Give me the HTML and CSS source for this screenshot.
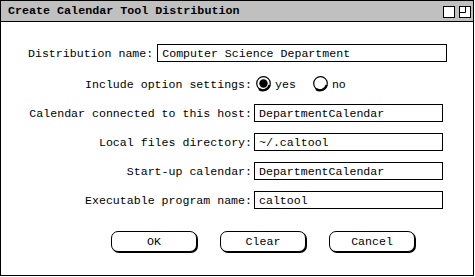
FILE: index.html
```html
<!DOCTYPE html>
<html lang="en">
<head>
    <meta charset="UTF-8">
    <title>Create Calendar Tool Distribution</title>
    <link rel="stylesheet" href="styles.css">
</head>
<body>

    <div class="window">
        <!-- title bar -->
        <div class="titlebar">
            <span class="title">Create Calendar Tool Distribution</span>
            <div class="title-icons">
                <svg width="12" height="12" viewBox="0 0 12 12">
                    <rect x="0.5" y="0.5" width="11" height="11" fill="#fff" stroke="#000"/>
                </svg>
                <svg width="12" height="12" viewBox="0 0 12 12">
                    <rect x="0.5" y="0.5" width="11" height="11" fill="#fff" stroke="#000"/>
                    <path d="M6.5 0.5 V6.5 H0.5" fill="none" stroke="#000"/>
                </svg>
            </div>
        </div>

        <!-- form -->
        <div class="form">
            <div class="dist-row">
                <label class="label">Distribution name:</label>
                <input class="field wide" type="text" value="Computer Science Department">
            </div>

            <div class="grid">
                <label class="label">Include option settings:</label>
                <div class="radios">
                    <span class="radio">
                        <svg width="16" height="16" viewBox="0 0 16 16">
                            <circle cx="7.5" cy="7.5" r="6.8" fill="#fff" stroke="#000" stroke-width="1.2"/>
                            <path d="M13.6 9 A6.8 6.8 0 0 1 3 13" fill="none" stroke="#000" stroke-width="2.2"/>
                            <circle cx="7.5" cy="7.5" r="4.2" fill="#000"/>
                        </svg>
                        yes
                    </span>
                    <span class="radio">
                        <svg width="16" height="16" viewBox="0 0 16 16">
                            <circle cx="7.5" cy="7.5" r="6.8" fill="#fff" stroke="#000" stroke-width="1.2"/>
                            <path d="M13.6 9 A6.8 6.8 0 0 1 3 13" fill="none" stroke="#000" stroke-width="2.2"/>
                        </svg>
                        no
                    </span>
                </div>

                <label class="label">Calendar connected to this host:</label>
                <input class="field" type="text" value="DepartmentCalendar">

                <label class="label">Local files directory:</label>
                <input class="field" type="text" value="~/.caltool">

                <label class="label">Start-up calendar:</label>
                <input class="field" type="text" value="DepartmentCalendar">

                <label class="label">Executable program name:</label>
                <input class="field" type="text" value="caltool">
            </div>

            <!-- buttons -->
            <div class="buttons">
                <button class="btn">OK</button>
                <button class="btn">Clear</button>
                <button class="btn">Cancel</button>
            </div>
        </div>
    </div>

</body>
</html>
```

FILE: styles.css
```css
/* page */
body {
    margin: 0;
    padding: 0;
    background: #fff;
    font-family: "Liberation Mono", "DejaVu Sans Mono", monospace;
    font-size: 11.6px;
    color: #000;
}

.window {
    width: 474px;
    height: 276px;
    box-sizing: border-box;
    border: 1px solid #000;
    background: #fff;
}

/* title bar */
.titlebar {
    height: 21px;
    box-sizing: border-box;
    background: #c0c0c0;
    border-bottom: 1px solid #000;
    display: flex;
    align-items: center;
    justify-content: space-between;
    padding: 0 2px 0 7px;
}

.title {
    font-weight: bold;
    font-size: 11.7px;
}

.title-icons {
    display: flex;
    gap: 4px;
    padding-top: 1px;
}

.title-icons svg {
    display: block;
}

/* form */
.form {
    padding: 22px 0 0 27px;
}

.dist-row {
    display: flex;
    align-items: center;
    gap: 4px;
}

.label {
    white-space: nowrap;
}

.field {
    height: 18px;
    box-sizing: border-box;
    border: 1px solid #000;
    border-radius: 0;
    background: #fff;
    padding: 0 4px;
    margin: 0;
    font-family: inherit;
    font-size: 11.6px;
    color: #000;
    outline: none;
}

.field.wide {
    width: 290px;
}

.grid {
    display: grid;
    grid-template-columns: 224px 189px;
    column-gap: 2px;
    row-gap: 11px;
    margin-top: 13px;
    align-items: center;
}

.grid .label {
    text-align: right;
}

.grid .field {
    width: 189px;
}

.radios {
    display: flex;
    align-items: center;
    gap: 17px;
    padding-left: 2px;
    height: 18px;
}

.radio {
    display: flex;
    align-items: center;
    gap: 3px;
}

.radio svg {
    display: block;
}

/* buttons */
.buttons {
    display: flex;
    gap: 23px;
    margin-top: 22px;
    padding-left: 83px;
}

.btn {
    width: 86px;
    height: 21px;
    box-sizing: border-box;
    border: 1px solid #000;
    border-radius: 7px;
    box-shadow: 1px 1px 0 #000;
    background: #fff;
    font-family: inherit;
    font-size: 11.6px;
    color: #000;
    padding: 0;
    margin: 0;
}
```
